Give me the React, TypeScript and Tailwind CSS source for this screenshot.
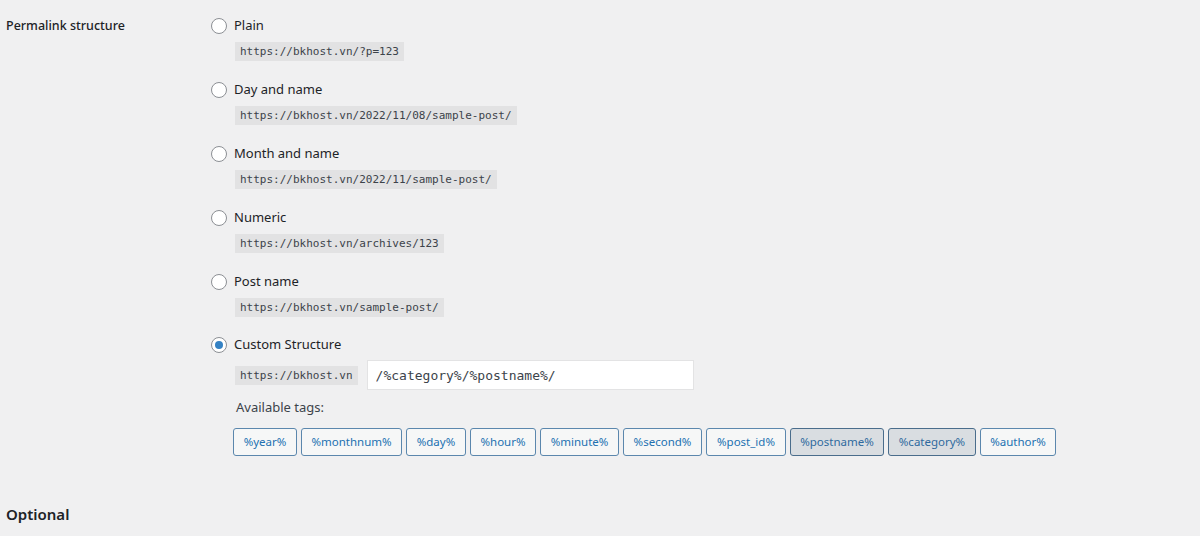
import React from "react";

const options = [
  { label: "Plain", code: "https://bkhost.vn/?p=123" },
  { label: "Day and name", code: "https://bkhost.vn/2022/11/08/sample-post/" },
  { label: "Month and name", code: "https://bkhost.vn/2022/11/sample-post/" },
  { label: "Numeric", code: "https://bkhost.vn/archives/123" },
  { label: "Post name", code: "https://bkhost.vn/sample-post/" },
];

const tags = [
  { name: "%year%", w: "w-[64px]" },
  { name: "%monthnum%", w: "w-[101px]" },
  { name: "%day%", w: "w-[60px]" },
  { name: "%hour%", w: "w-[66px]" },
  { name: "%minute%", w: "w-[79px]" },
  { name: "%second%", w: "w-[79px]" },
  { name: "%post_id%", w: "w-[80px]" },
  { name: "%postname%", w: "w-[94px]", active: true },
  { name: "%category%", w: "w-[88px]", active: true },
  { name: "%author%", w: "w-[76px]" },
];

function Radio({ checked }: { checked?: boolean }) {
  return (
    <span className="w-4 h-4 rounded-full border border-[#8c8f94] bg-white flex items-center justify-center shrink-0">
      {checked && <span className="w-2 h-2 rounded-full bg-[#3582c4]" />}
    </span>
  );
}

function Code({ children }: { children: React.ReactNode }) {
  return (
    <code className="block bg-[#e2e2e3] text-[#3c434a] text-[11px] leading-[19px] h-[19px] px-[5px] font-['DejaVu_Sans_Mono',monospace]">
      {children}
    </code>
  );
}

export default function App() {
  return (
    <div className="w-[1200px] h-[536px] bg-[#f0f0f1] text-[#1d2327] font-['Noto_Sans',sans-serif] overflow-hidden">
      <div className="flex pt-[16px]">
        <div className="w-[211px] pl-[6px] text-[12.5px] font-medium leading-[20px]">
          Permalink structure
        </div>
        <div className="flex flex-col">
          {options.map((o) => (
            <div key={o.label} className="flex flex-col mb-[19px]">
              <label className="flex items-center gap-[7px] h-[20px] text-[13px]">
                <Radio />
                {o.label}
              </label>
              <div className="flex pl-[24px] mt-[6px]">
                <Code>{o.code}</Code>
              </div>
            </div>
          ))}
          <label className="flex items-center gap-[7px] h-[20px] text-[13px] -mt-[1px]">
            <Radio checked />
            Custom Structure
          </label>
          <div className="flex items-center gap-[9px] pl-[24px] mt-[5px]">
            <Code>https://bkhost.vn</Code>
            <input
              readOnly
              value="/%category%/%postname%/"
              className="w-[327px] h-[30px] bg-white border border-[#e3e3e4] px-[8px] text-[13px] text-[#3c434a] font-['DejaVu_Sans_Mono',monospace] outline-none"
            />
          </div>
          <div className="pl-[25px] mt-[7px] text-[13px] text-[#3c434a] leading-[20px]">Available tags:</div>
          <div className="flex gap-[4px] pl-[22px] mt-[11px]">
            {tags.map((t) => (
              <button
                key={t.name}
                className={
                  t.active
                    ? `${t.w} h-[28px] rounded-[3px] border border-[#4a6d8c] bg-[#d9dde1] text-[#2f6a9e] text-[11.5px] flex items-center justify-center`
                    : `${t.w} h-[28px] rounded-[3px] border border-[#5b87ad] bg-[#f6f7f7] text-[#2271b1] text-[11.5px] flex items-center justify-center`
                }
              >
                {t.name}
              </button>
            ))}
          </div>
        </div>
      </div>
      <h2 className="pl-[6px] mt-[48px] text-[15px] font-semibold leading-[20px]">Optional</h2>
    </div>
  );
}
